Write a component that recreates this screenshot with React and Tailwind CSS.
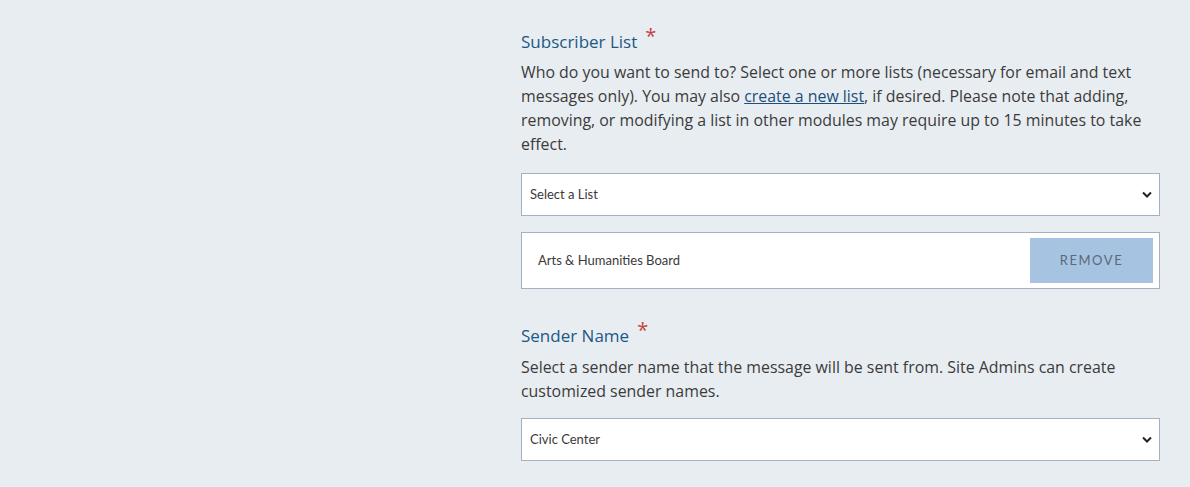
import React from "react";

function Chevron() {
  return (
    <svg width="10" height="7" viewBox="0 0 10 7" className="shrink-0">
      <path d="M1 1.5 L5 5.5 L9 1.5" fill="none" stroke="#222" strokeWidth="2" />
    </svg>
  );
}

function SelectBox({ value }) {
  return (
    <div className="h-[43px] bg-white border border-[#a3b1c2] flex items-center justify-between pl-2 pr-[7px] text-[13px] text-[#3a3a3a] font-['Lato',sans-serif]">
      <span>{value}</span>
      <Chevron />
    </div>
  );
}

function Label({ children }) {
  return (
    <div className="flex items-start text-[17px] text-[#1d5884] leading-[24px]">
      <span>{children}</span>
      <span className="text-[#c8423a] text-[20px] leading-none ml-[8px] -mt-[4px]">*</span>
    </div>
  );
}

export default function App() {
  return (
    <div className="w-[1190px] h-[487px] bg-[#e8edf2] overflow-hidden font-['Open_Sans',sans-serif]">
      <div className="ml-[521px] w-[639px] pt-[30px]">
        <Label>Subscriber List</Label>
        <p className="mt-[6px] text-[15.9px] leading-[24px] text-[#3b3b3b]">
          Who do you want to send to? Select one or more lists (necessary for email and text messages only). You may also{" "}
          <a className="text-[#1d4f78] underline">create a new list</a>, if desired. Please note that adding, removing, or modifying a list in other modules may require up to 15 minutes to take effect.
        </p>
        <div className="mt-[17px]">
          <SelectBox value="Select a List" />
        </div>
        <div className="mt-[16px] h-[57px] bg-white border border-[#a3b1c2] flex items-center justify-between pl-4 pr-[6px] text-[13px] text-[#3a3a3a] font-['Lato',sans-serif]">
          <span>Arts &amp; Humanities Board</span>
          <button className="w-[123px] h-[45px] bg-[#a6c4e2] text-[#5b6877] text-[13px] tracking-[0.12em]">
            REMOVE
          </button>
        </div>
        <div className="mt-[35px]">
          <Label>Sender Name</Label>
        </div>
        <p className="mt-[7px] text-[15.9px] leading-[24px] text-[#3b3b3b]">
          Select a sender name that the message will be sent from. Site Admins can create customized sender names.
        </p>
        <div className="mt-[15px]">
          <SelectBox value="Civic Center" />
        </div>
      </div>
    </div>
  );
}
